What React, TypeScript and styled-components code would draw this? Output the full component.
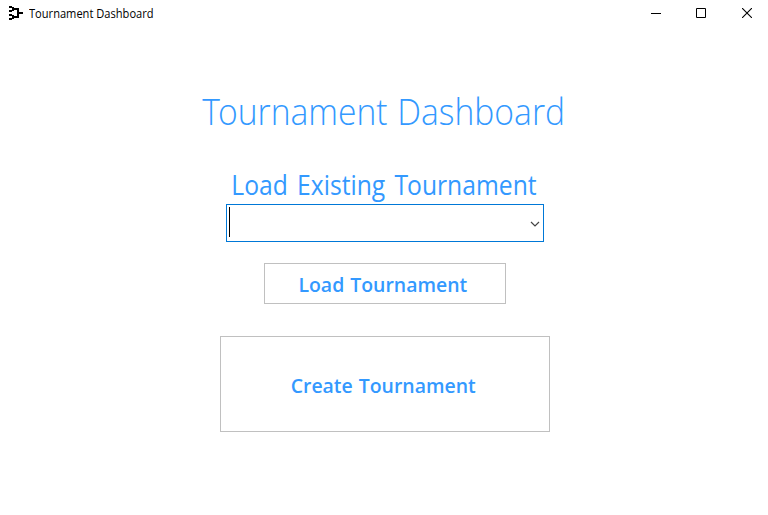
import React from "react";
import styled, { createGlobalStyle } from "styled-components";

const GlobalStyle = createGlobalStyle`
  * { box-sizing: border-box; }
  body { margin: 0; background: #fff; font-family: "Open Sans", "Noto Sans", sans-serif; }
`;

const Window = styled.div`
  width: 768px;
  height: 515px;
  display: flex;
  flex-direction: column;
  background: #fff;
  overflow: hidden;
`;

const TitleBar = styled.header`
  height: 27px;
  flex: none;
  display: flex;
  align-items: center;
  padding-left: 8px;
`;

const AppIcon = styled.svg`
  display: block;
  flex: none;
  margin-top: -1px;
`;

const Caption = styled.span`
  flex: 1;
  margin-left: 5px;
  font-size: 12px;
  line-height: 16px;
  color: #000;
  transform: scaleX(0.925);
  transform-origin: left;
`;

const WindowControls = styled.div`
  display: flex;
  align-self: flex-start;
  margin-right: -2px;
`;

const WindowButton = styled.button`
  width: 46px;
  height: 26px;
  padding: 0;
  border: 0;
  background: transparent;
  display: grid;
  place-items: center;

  svg { display: block; }
`;

const Content = styled.main`
  flex: 1;
  display: flex;
  flex-direction: column;
  align-items: center;
`;

const Title = styled.h1`
  margin: 57px 0 0;
  height: 54px;
  line-height: 53px;
  font-size: 37px;
  font-weight: 300;
  word-spacing: 1px;
  color: #3399ff;
  white-space: nowrap;
  transform: scaleX(0.909);
`;

const Label = styled.label`
  margin-top: 28px;
  height: 38px;
  line-height: 38px;
  font-size: 26.5px;
  word-spacing: 3px;
  color: #3399ff;
  white-space: nowrap;
  transform: scaleX(0.931);
`;

const Kern = styled.span<{ $by: number }>`
  letter-spacing: ${(p) => p.$by}px;
`;

const Combo = styled.div`
  width: 318px;
  height: 38px;
  margin-left: 2px;
  border: 1px solid #0078d7;
  display: flex;
  align-items: center;
  justify-content: space-between;
  padding: 0 3px 0 2px;
`;

const Caret = styled.span`
  width: 1px;
  height: 30px;
  margin-bottom: 2px;
  background: #000;
`;

const Chevron = styled.svg`
  display: block;
  margin-top: 2px;
`;

const ActionButton = styled.button<{ $w: number; $h: number; $top: number }>`
  width: ${(p) => p.$w}px;
  height: ${(p) => p.$h}px;
  margin: ${(p) => p.$top}px 0 0 2px;
  padding: 2px 4px 0 0;
  border: 1px solid #c0c0c0;
  background: #fff;
  color: #3399ff;
  font: 600 20px "Open Sans", sans-serif;
  word-spacing: 1px;
  white-space: nowrap;
`;

const ButtonText = styled.span`
  display: inline-block;
  transform: scaleX(0.972);
`;

export default function App() {
  return (
    <Window>
      <GlobalStyle />
      <TitleBar>
        <AppIcon width="16" height="16" viewBox="0 0 16 16" fill="none" stroke="#000" strokeWidth="2" shapeRendering="crispEdges">
          <path d="M1 2h3M1 6h3M1 10h3M1 14h3M5 2v4M5 10v4M5 4h5v8H5M10 8h5" />
        </AppIcon>
        <Caption>Tournament Dashboard</Caption>
        <WindowControls>
          <WindowButton aria-label="Minimize"><svg width="12" height="10"><path d="M2 5.5h10" stroke="#000" /></svg></WindowButton>
          <WindowButton aria-label="Maximize"><svg width="10" height="10"><path d="M.5.5h9v9h-9z" stroke="#000" fill="none" /></svg></WindowButton>
          <WindowButton aria-label="Close"><svg width="10" height="10"><path d="M0 0l10 10M10 0L0 10" stroke="#000" strokeWidth="1.1" /></svg></WindowButton>
        </WindowControls>
      </TitleBar>
      <Content>
        <Title><Kern $by={-2}>T</Kern>ournament Dashboard</Title>
        <Label>Load Existing <Kern $by={-1}>T</Kern>ournament</Label>
        <Combo>
          <Caret />
          <Chevron width="10" height="6" fill="none" stroke="#444" strokeWidth="1.2"><path d="M1 1l4 4 4-4" /></Chevron>
        </Combo>
        <ActionButton $w={242} $h={41} $top={21}><ButtonText>Load Tournament</ButtonText></ActionButton>
        <ActionButton $w={330} $h={96} $top={32}><ButtonText>Create Tournament</ButtonText></ActionButton>
      </Content>
    </Window>
  );
}
